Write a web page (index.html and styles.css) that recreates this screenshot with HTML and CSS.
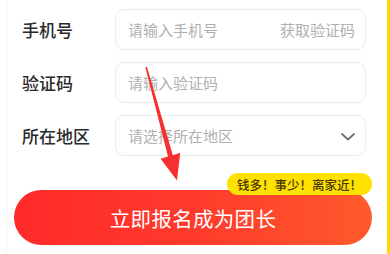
FILE: index.html
```html
<!DOCTYPE html>
<html lang="zh-CN">
<head>
<meta charset="utf-8">
<link rel="stylesheet" href="styles.css">
</head>
<body>
<div class="page">
  <div class="gutter"></div>
  <div class="main">
    <div class="form">
      <div class="row">
        <div class="label">手机号</div>
        <div class="field">
          <span class="placeholder">请输入手机号</span>
          <span class="action">获取验证码</span>
        </div>
      </div>
      <div class="row">
        <div class="label">验证码</div>
        <div class="field">
          <span class="placeholder">请输入验证码</span>
        </div>
      </div>
      <div class="row">
        <div class="label">所在地区</div>
        <div class="field">
          <span class="placeholder">请选择所在地区</span>
          <svg class="chevron" width="14" height="8" viewBox="0 0 14 8"><path d="M1 1 L7 6.5 L13 1" fill="none" stroke="#6b6f7a" stroke-width="1.8" stroke-linecap="round" stroke-linejoin="round"/></svg>
        </div>
      </div>
    </div>
    <div class="cta">
      <div class="button">立即报名成为团长</div>
      <div class="badge">钱多！事少！离家近！</div>
    </div>
  </div>
  <div class="edge"></div>
  <svg class="arrow" width="390" height="254" viewBox="0 0 390 254">
    <polygon points="145.3,67 147,67 172.8,155.2 180.2,152.8 177,180.5 160.6,158.8 168,156.6" fill="#f5302e"/>
  </svg>
</div>
</body>
</html>
```

FILE: styles.css
```css
html, body {
  margin: 0;
  padding: 0;
  background: #ffffff;
}

.page {
  position: relative;
  width: 390px;
  height: 254px;
  display: flex;
  overflow: hidden;
  font-family: "Noto Sans CJK SC", "Noto Sans", sans-serif;
}

.gutter {
  width: 6px;
  flex: none;
}

.main {
  flex: 1;
  border-left: 1px solid #f3f3f3;
  padding-top: 9px;
  padding-right: 3px;
  display: flex;
  flex-direction: column;
}

.edge {
  width: 3px;
  flex: none;
  background: #ffd900;
}

.form {
  display: flex;
  flex-direction: column;
  gap: 12px;
  padding-left: 15px;
}

.row {
  display: flex;
  align-items: center;
}

.label {
  width: 93px;
  font-size: 17px;
  font-weight: 500;
  color: #2b2b2b;
  line-height: 20px;
}

.field {
  box-sizing: border-box;
  width: 251px;
  height: 41px;
  border: 1px solid #ececec;
  border-radius: 9px;
  display: flex;
  align-items: center;
  justify-content: space-between;
  padding: 0 10px 0 12px;
}

.placeholder {
  font-size: 15px;
  color: #b0b0b0;
}

.action {
  font-size: 15px;
  color: #b0b0b0;
}

.chevron {
  margin-top: 2px;
}

.cta {
  position: relative;
  margin-top: 34px;
  margin-left: 7px;
  width: 358px;
}

.button {
  height: 55px;
  border-radius: 28px;
  background: linear-gradient(90deg, #ff2a2a 0%, #ff3a2c 50%, #ff5a2c 100%);
  color: #ffffff;
  font-size: 20.5px;
  display: flex;
  align-items: center;
  justify-content: center;
  letter-spacing: 0.3px;
}

.badge {
  position: absolute;
  top: -17px;
  right: 0;
  width: 145px;
  height: 22px;
  box-sizing: border-box;
  border-radius: 11px;
  background: #ffe100;
  color: #4a3800;
  font-size: 12.5px;
  font-weight: 500;
  display: flex;
  align-items: center;
  justify-content: center;
}

.arrow {
  position: absolute;
  left: 0;
  top: 0;
  pointer-events: none;
}
```
